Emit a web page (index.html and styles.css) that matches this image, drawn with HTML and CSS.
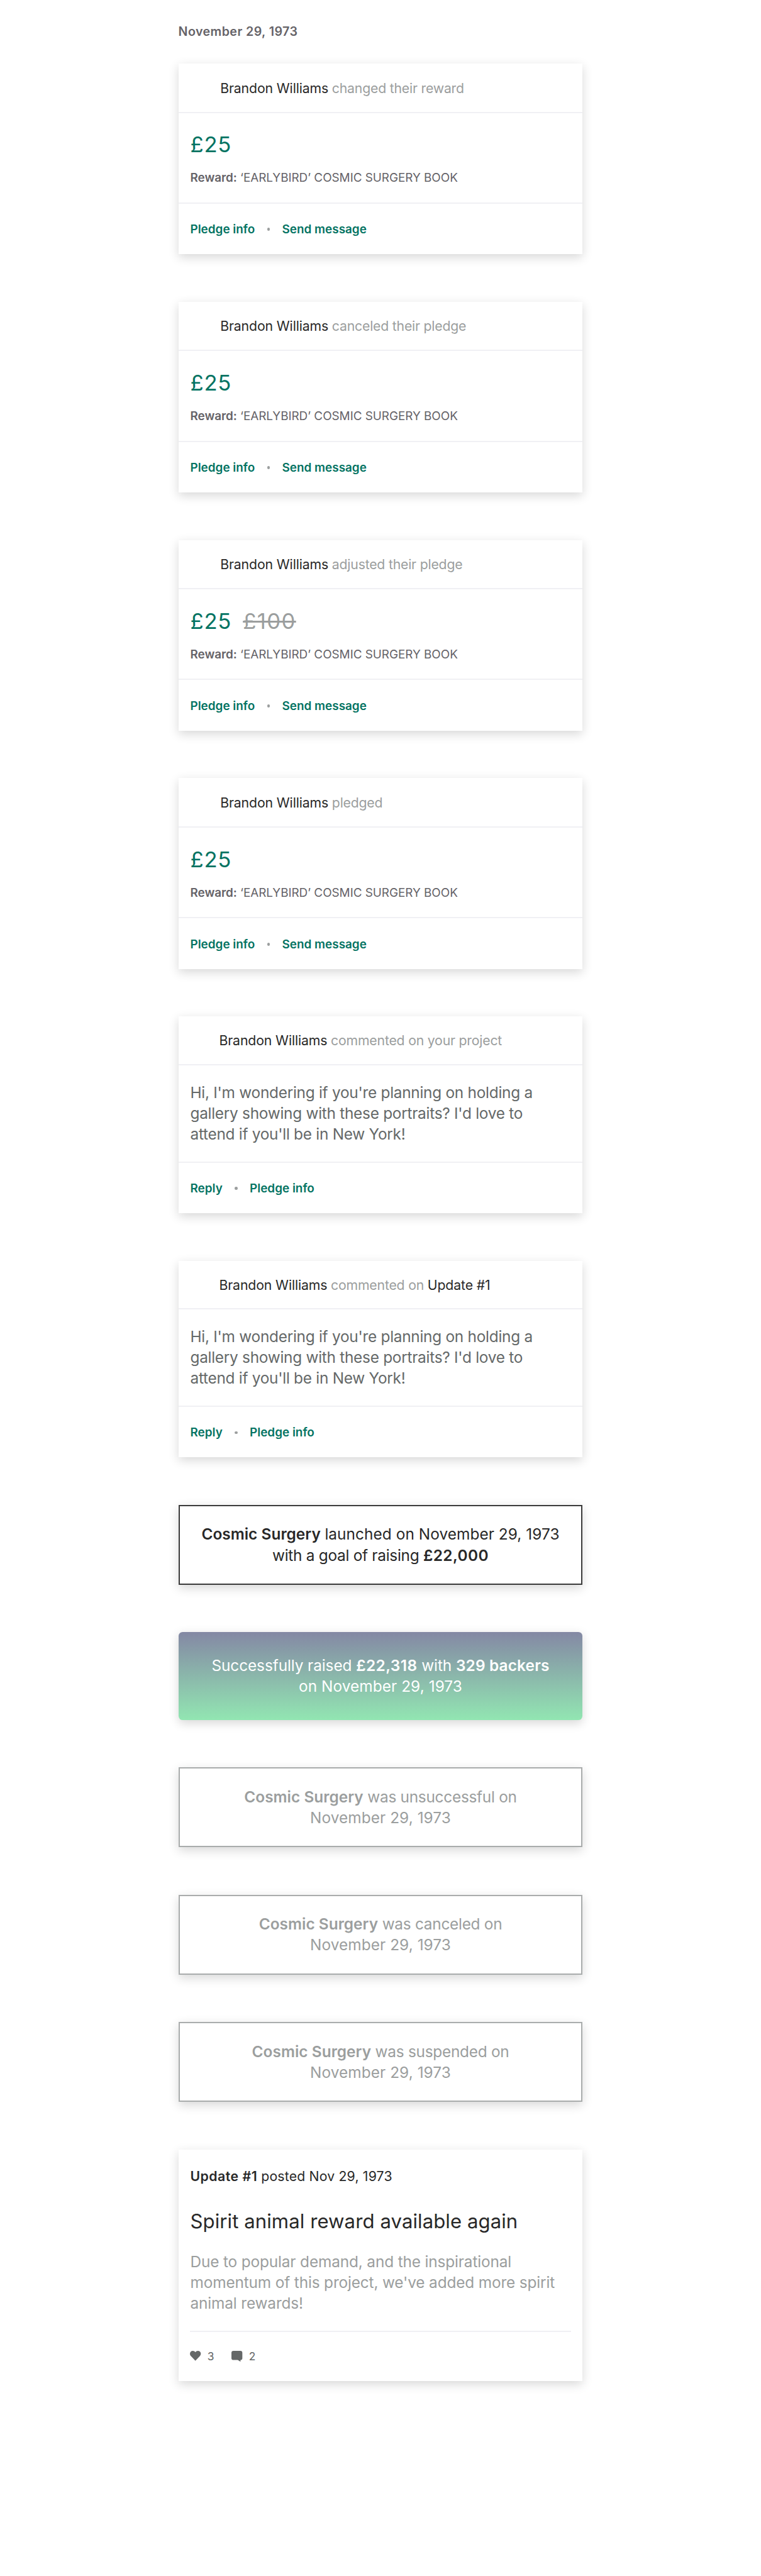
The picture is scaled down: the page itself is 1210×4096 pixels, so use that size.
FILE: index.html
```
<!DOCTYPE html>
<html lang="en">
<head>
<meta charset="utf-8">
<title>Project activity</title>
<link rel="stylesheet" href="styles.css">
</head>
<body>
<main class="feed">
  <h1 class="date">November 29, 1973</h1>

  <article class="card">
    <header class="head"><p><b>Brandon Williams</b> changed their reward</p></header>
    <div class="pledge">
      <p class="amount"><span>£25</span></p>
      <p class="reward"><b>Reward:</b> ‘EARLYBIRD’ COSMIC SURGERY BOOK</p>
    </div>
    <footer class="actions"><a>Pledge info</a><i class="dot"></i><a>Send message</a></footer>
  </article>

  <article class="card">
    <header class="head"><p><b>Brandon Williams</b> canceled their pledge</p></header>
    <div class="pledge">
      <p class="amount"><span>£25</span></p>
      <p class="reward"><b>Reward:</b> ‘EARLYBIRD’ COSMIC SURGERY BOOK</p>
    </div>
    <footer class="actions"><a>Pledge info</a><i class="dot"></i><a>Send message</a></footer>
  </article>

  <article class="card">
    <header class="head"><p><b>Brandon Williams</b> adjusted their pledge</p></header>
    <div class="pledge">
      <p class="amount"><span>£25</span><s>£100</s></p>
      <p class="reward"><b>Reward:</b> ‘EARLYBIRD’ COSMIC SURGERY BOOK</p>
    </div>
    <footer class="actions"><a>Pledge info</a><i class="dot"></i><a>Send message</a></footer>
  </article>

  <article class="card">
    <header class="head"><p><b>Brandon Williams</b> pledged</p></header>
    <div class="pledge">
      <p class="amount"><span>£25</span></p>
      <p class="reward"><b>Reward:</b> ‘EARLYBIRD’ COSMIC SURGERY BOOK</p>
    </div>
    <footer class="actions"><a>Pledge info</a><i class="dot"></i><a>Send message</a></footer>
  </article>

  <article class="card">
    <header class="head head-comment"><p><b>Brandon Williams</b> commented on your project</p></header>
    <p class="comment">Hi, I'm wondering if you're planning on holding a<br>gallery showing with these portraits? I'd love to<br>attend if you'll be in New York!</p>
    <footer class="actions"><a>Reply</a><i class="dot"></i><a>Pledge info</a></footer>
  </article>

  <article class="card">
    <header class="head head-comment"><p><b>Brandon Williams</b> commented on <b>Update #1</b></p></header>
    <p class="comment">Hi, I'm wondering if you're planning on holding a<br>gallery showing with these portraits? I'd love to<br>attend if you'll be in New York!</p>
    <footer class="actions"><a>Reply</a><i class="dot"></i><a>Pledge info</a></footer>
  </article>

  <article class="card banner launch">
    <p><b>Cosmic Surgery</b> <span class="wide">launched on November 29, 1973</span><br>with a goal of raising <b class="sum">£22,000</b></p>
  </article>

  <article class="card banner success">
    <p>Successfully raised <b class="sum">£22,318</b> with <b>329 backers</b><br><span class="wide">on November 29, 1973</span></p>
  </article>

  <article class="card banner ended">
    <p><b>Cosmic Surgery</b> was unsuccessful on<br><span class="wide">November 29, 1973</span></p>
  </article>

  <article class="card banner ended">
    <p><b>Cosmic Surgery</b> was canceled on<br><span class="wide">November 29, 1973</span></p>
  </article>

  <article class="card banner ended">
    <p><b>Cosmic Surgery</b> was suspended on<br><span class="wide">November 29, 1973</span></p>
  </article>

  <article class="card update">
    <p class="posted"><b>Update #1</b> posted Nov 29, 1973</p>
    <h2 class="title">Spirit animal reward available again</h2>
    <p class="summary">Due to popular demand, and the inspirational<br>momentum of this project, we've added more spirit<br>animal rewards!</p>
    <div class="counts">
      <svg class="icon" viewBox="0 0 22 22"><path d="M11 20 L2.2 10.9 C-.7 7.8-.6 3.9 1.7 1.7 C4.4-.8 8.9-.5 11 3 C13.1-.5 17.6-.8 20.3 1.7 C22.6 3.9 22.7 7.8 19.800 10.9 Z"/></svg>
      <span class="likes">3</span>
      <svg class="icon" viewBox="0 0 22 22"><path d="M4 0H18Q22 0 22 4V14.500Q22 18.500 18.300 18.500V22L12.700 18.500H4Q0 18.500 0 14.500V4Q0 0 4 0Z"/></svg>
      <span>2</span>
    </div>
  </article>
</main>
</body>
</html>
```
FILE: styles.css
```
/* 1rem = 10 design units; the design is 1536 units wide */
html { font-size: 7.8776px; }
* { box-sizing: border-box; margin: 0; padding: 0; }

body {
  background: #fff;
  color: #282828;
  font-family: Inter, "Liberation Sans", sans-serif;
}

b { font-weight: 600; }

.feed {
  display: flex;
  flex-direction: column;
  gap: 9.6rem;
  width: 81.6rem;
  min-height: 519.9rem;
  margin: 0 auto;
  padding-top: 4.96rem;
}

.date {
  margin-bottom: -4.76rem;
  color: #656368;
  font-size: 2.5rem;
  font-weight: 600;
  line-height: 3rem;
  letter-spacing: .02em;
}

.card {
  background: #fff;
  box-shadow: 0 .6rem 2rem rgba(0, 0, 0, .16);
}

.head {
  display: flex;
  align-items: center;
  height: 10rem;
  padding: .2rem 0 0 8.45rem;
  border-bottom: 2px solid #f0f0f4;
  color: #9b9e9e;
  font-size: 2.7rem;
  line-height: 3.4rem;
  letter-spacing: -.010em;
}
.head b {
  color: #282828;
  font-weight: 400;
  letter-spacing: -.006em;
}
.head-comment { height: 9.8rem; padding-left: 8.23rem; }

.pledge {
  height: 18.3rem;
  padding: 3.77rem 2.4rem 0;
  border-bottom: 2px solid #f0f0f4;
}
.amount {
  display: flex;
  gap: 2.3rem;
  color: #037362;
  font-size: 4.4rem;
  line-height: 5.2rem;
  letter-spacing: .021em;
}
.amount s {
  color: #9b9e9e;
  letter-spacing: .04em;
  text-decoration-thickness: .4rem;
}
.reward {
  margin-top: 2.63rem;
  color: #656368;
  font-size: 2.4rem;
  line-height: 3rem;
  letter-spacing: -.002em;
}

.comment {
  height: 19.7rem;
  padding: 3.47rem 2.4rem 0;
  border-bottom: 2px solid #f0f0f4;
  color: #656969;
  font-size: 3.1rem;
  line-height: 4.2rem;
  letter-spacing: -.0115em;
}

.actions {
  display: flex;
  align-items: center;
  gap: 2.45rem;
  height: 10.2rem;
  padding: .2rem 2.4rem 0;
  color: #037362;
  font-size: 2.4rem;
  font-weight: 600;
  line-height: 3rem;
}
.dot {
  width: .6rem;
  height: .6rem;
  border-radius: 50%;
  background: #9b9e9e;
}

.banner {
  height: 16.1rem;
  padding-top: 3.62rem;
  border: 2px solid #3a3a3a;
  font-size: 3.1rem;
  line-height: 4.2rem;
  letter-spacing: -.0115em;
  text-align: center;
  white-space: nowrap;
}
.banner b { letter-spacing: .001em; }
.banner .sum { letter-spacing: .0166em; }
.banner .wide { letter-spacing: .002em; }
.success {
  height: 17.7rem;
  padding-top: 4.67rem;
  border: 0;
  border-radius: .8rem;
  background: linear-gradient(#8488a4, #92e6b2);
  color: #fff;
  letter-spacing: -.004em;
}
.success b { letter-spacing: .006em; }
.ended { border-color: #a9acac; color: #9b9e9e; }

.update { height: 46.7rem; padding: 3.69rem 2.4rem 0; }
.posted {
  font-size: 2.7rem;
  line-height: 3.4rem;
  letter-spacing: .008em;
}
.posted b { letter-spacing: .023em; }
.title {
  margin-top: 5.17rem;
  font-size: 3.95rem;
  font-weight: 400;
  line-height: 4.8rem;
  letter-spacing: .0025em;
}
.summary {
  margin-top: 3.51rem;
  color: #9b9e9e;
  font-size: 3.1rem;
  line-height: 4.2rem;
  letter-spacing: -.0065em;
  white-space: nowrap;
}
.counts {
  display: flex;
  margin-top: 3.43rem;
  padding-top: 3.4rem;
  border-top: 2px solid #f0f0f4;
  color: #656868;
  font-size: 2.2rem;
  line-height: 3rem;
}
.icon {
  width: 2.2rem;
  height: 2.2rem;
  margin: .45rem 1.25rem 0 0;
  fill: #656868;
}
.likes { width: 4.93rem; }
```
